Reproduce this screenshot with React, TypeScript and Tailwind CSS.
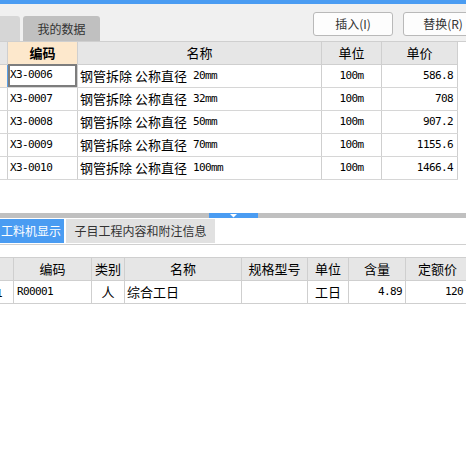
import React from "react";

const cjk = "font-['Noto_Sans_CJK_SC','Microsoft_YaHei',sans-serif]";
const mono = "font-['DejaVu_Sans_Mono',monospace] text-[11px] tracking-[-0.6px]";

type Row = { code: string; size: string; unit: string; price: string };

const rows: Row[] = [
  { code: "X3-0006", size: "20mm", unit: "100m", price: "586.8" },
  { code: "X3-0007", size: "32mm", unit: "100m", price: "708" },
  { code: "X3-0008", size: "50mm", unit: "100m", price: "907.2" },
  { code: "X3-0009", size: "70mm", unit: "100m", price: "1155.6" },
  { code: "X3-0010", size: "100mm", unit: "100m", price: "1466.4" },
];

const lowerCols = [
  { label: "", w: "w-[14px]" },
  { label: "编码", w: "w-[78px]" },
  { label: "类别", w: "w-[33px]" },
  { label: "名称", w: "w-[117px]" },
  { label: "规格型号", w: "w-[66px]" },
  { label: "单位", w: "w-[41px]" },
  { label: "含量", w: "w-[57px]" },
  { label: "定额价", w: "w-[64px]" },
];

function Mono({ children }: { children: React.ReactNode }) {
  return <span className={mono}>{children}</span>;
}

export default function App() {
  return (
    <div className={`w-[466px] h-[452px] overflow-hidden bg-white text-black ${cjk}`}>
      <div className="h-[4px] bg-[#4a9cf2]" />

      {/* toolbar with tabs and buttons */}
      <div className="h-[37px] bg-[#f0f0f0] flex items-end relative">
        <div className="h-[25px] w-[20px] rounded-tr-[3px] bg-[#d6d6d6]" />
        <div className="ml-[3px] h-[25px] w-[77px] rounded-t-[3px] bg-[#c0c0c0] flex items-center justify-center text-[12px] text-[#333]">
          我的数据
        </div>
        <div className="ml-auto mb-[5px] self-end flex gap-[10px] -mr-[17px]">
          <button className="h-[24px] w-[80px] rounded-[3px] border border-[#b9b9b9] bg-[#fdfdfd] text-[12px] text-[#333]">
            插入(I)
          </button>
          <button className="h-[24px] w-[80px] rounded-[3px] border border-[#b9b9b9] bg-[#fdfdfd] text-[12px] text-[#333]">
            替换(R)
          </button>
        </div>
      </div>

      {/* upper table */}
      <div className="h-[172px] border-t border-[#cfcfcf]">
        <div className="flex h-[23px] text-[13px] bg-[#e6e6e6] w-[458px] border-b border-[#cfcfcf]">
          <div className="w-[8px] border-r border-[#cfcfcf]" />
          <div className="w-[70px] border-r border-[#cfcfcf] bg-[#fde8cc] font-bold flex items-center justify-center">编码</div>
          <div className="w-[244px] border-r border-[#cfcfcf] flex items-center justify-center">名称</div>
          <div className="w-[60px] border-r border-[#cfcfcf] flex items-center justify-center">单位</div>
          <div className="w-[76px] border-r border-[#cfcfcf] flex items-center justify-center">单价</div>
        </div>
        {rows.map((r, i) => (
          <div key={r.code} className="flex h-[23px] w-[458px] text-[13px] border-b border-[#d6d6d6]">
            <div className={`w-[8px] border-r ${i === 0 ? "bg-[#fff3e4] border-[#5aa0e8]" : "border-[#cfcfcf]"}`} />
            <div
              className={`w-[70px] border-r border-[#cfcfcf] flex items-center pl-[2px] ${
                i === 0 ? "shadow-[inset_0_0_0_2px_#7d7d7d] -mt-px h-[23px]" : ""
              }`}
            >
              <Mono>{r.code}</Mono>
            </div>
            <div className="w-[244px] border-r border-[#cfcfcf] flex items-center pl-[2px] whitespace-pre">
              钢管拆除 公称直径<Mono> {r.size}</Mono>
            </div>
            <div className="w-[60px] border-r border-[#cfcfcf] flex items-center justify-center">
              <Mono>{r.unit}</Mono>
            </div>
            <div className="w-[76px] border-r border-[#cfcfcf] flex items-center justify-end pr-[4px]">
              <Mono>{r.price}</Mono>
            </div>
          </div>
        ))}
      </div>

      {/* splitter */}
      <div className="h-[5px] bg-[#c0c0c0] flex">
        <div className="ml-[209px] w-[49px] bg-[#4a9cf2] flex justify-center">
          <svg width="7" height="4" viewBox="0 0 7 4" className="mt-[1px]">
            <path d="M0 0 H7 L3.5 3.5 Z" fill="#fff" />
          </svg>
        </div>
      </div>

      {/* lower tabs */}
      <div className="h-[27px] flex items-end gap-[2px] border-b border-[#d0d0d0] pb-px">
        <div className="h-[24px] w-[64px] bg-[#4a9cf2] text-white text-[12px] flex items-center pl-[1px]">
          工料机显示
        </div>
        <div className="h-[24px] w-[149px] bg-[#e1e1e1] text-[#333] text-[12px] flex items-center justify-center">
          子目工程内容和附注信息
        </div>
      </div>

      {/* lower table */}
      <div className="mt-[12px] border-t border-[#cfcfcf]">
        <div className="flex h-[23px] text-[13px] bg-[#e6e6e6] border-b border-[#cfcfcf]">
          {lowerCols.map((c, i) => (
            <div key={i} className={`${c.w} shrink-0 border-r border-[#cfcfcf] flex items-center justify-center`}>
              {c.label}
            </div>
          ))}
        </div>
        <div className="flex h-[23px] text-[13px] border-b border-[#cfcfcf]">
          <div className="w-[14px] shrink-0 border-r border-[#cfcfcf] flex items-center overflow-hidden">
            <span className="-ml-[4px]">
              <Mono>1</Mono>
            </span>
          </div>
          <div className="w-[78px] shrink-0 border-r border-[#cfcfcf] flex items-center pl-[3px]">
            <Mono>R00001</Mono>
          </div>
          <div className="w-[33px] shrink-0 border-r border-[#cfcfcf] flex items-center justify-center">人</div>
          <div className="w-[117px] shrink-0 border-r border-[#cfcfcf] flex items-center pl-[2px]">综合工日</div>
          <div className="w-[66px] shrink-0 border-r border-[#cfcfcf]" />
          <div className="w-[41px] shrink-0 border-r border-[#cfcfcf] flex items-center justify-center">工日</div>
          <div className="w-[57px] shrink-0 border-r border-[#cfcfcf] flex items-center justify-end pr-[3px]">
            <Mono>4.89</Mono>
          </div>
          <div className="w-[64px] shrink-0 border-r border-[#cfcfcf] flex items-center justify-end pr-[6px]">
            <Mono>120</Mono>
          </div>
        </div>
      </div>
    </div>
  );
}
